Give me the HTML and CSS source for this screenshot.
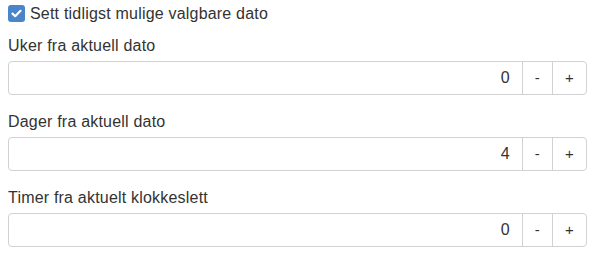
FILE: index.html
```html
<!DOCTYPE html>
<html lang="no">
<head>
    <meta charset="UTF-8">
    <title>Tidligste dato</title>
    <link rel="stylesheet" href="styles.css">
</head>
<body>
    <div class="settings">
        <label class="check-row">
            <span class="check-box">
                <svg width="11" height="9" viewBox="0 0 11 9">
                    <path d="M1.5 4.6 L4.2 7.2 L9.5 1.8" fill="none" stroke="#fff" stroke-width="2.2" stroke-linecap="round" stroke-linejoin="round"/>
                </svg>
            </span>
            Sett tidligst mulige valgbare dato
        </label>

        <div class="field">
            <div class="field-label">Uker fra aktuell dato</div>
            <div class="input-group">
                <div class="input-value">0</div>
                <div class="step-button">-</div>
                <div class="step-button last">+</div>
            </div>
        </div>

        <div class="field">
            <div class="field-label">Dager fra aktuell dato</div>
            <div class="input-group">
                <div class="input-value">4</div>
                <div class="step-button">-</div>
                <div class="step-button last">+</div>
            </div>
        </div>

        <div class="field">
            <div class="field-label">Timer fra aktuelt klokkeslett</div>
            <div class="input-group">
                <div class="input-value">0</div>
                <div class="step-button">-</div>
                <div class="step-button last">+</div>
            </div>
        </div>
    </div>
</body>
</html>
```

FILE: styles.css
```css
* {
    margin: 0;
    padding: 0;
    box-sizing: border-box;
}

body {
    background: #fff;
    color: #333;
    font-family: 'Liberation Sans', Arial, sans-serif;
    font-size: 16px;
    letter-spacing: 0.2px;
}

.settings {
    width: 579px;
    margin-left: 8px;
    padding-top: 5px;
}

.check-row {
    display: flex;
    align-items: center;
    gap: 5px;
    height: 17px;
    line-height: 17px;
}

.check-box {
    display: flex;
    align-items: center;
    justify-content: center;
    width: 17px;
    height: 17px;
    border-radius: 3px;
    background: #4a84c9;
}

.field {
    margin-top: 13px;
}

.field + .field {
    margin-top: 16px;
}

.field-label {
    line-height: 22px;
    margin-bottom: 4px;
}

.input-group {
    display: flex;
    height: 34px;
    border: 1px solid #d2d2d2;
    border-radius: 4px;
}

.input-value {
    flex: 1;
    text-align: right;
    line-height: 32px;
    padding-right: 12px;
}

.step-button {
    line-height: 32px;
    padding: 0 12px;
    border-left: 1px solid #d2d2d2;
    font-size: 15px;
}
```
